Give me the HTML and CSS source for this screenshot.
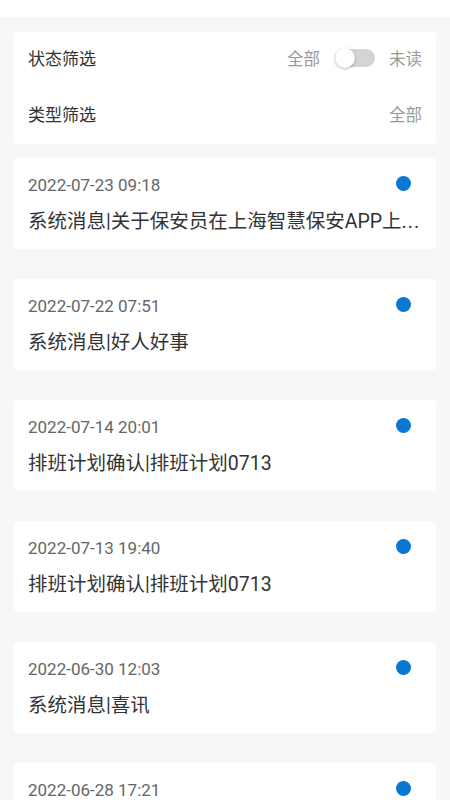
FILE: index.html
```html
<!DOCTYPE html>
<html lang="zh-CN">
<head>
    <meta charset="UTF-8">
    <meta name="viewport" content="width=device-width, initial-scale=1.0">
    <title>消息列表</title>
    <link rel="stylesheet" href="styles.css">
</head>
<body>
    <div class="header"></div>
    <div class="page">
        <div class="filter">
            <div class="filter-row">
                <span class="filter-label">状态筛选</span>
                <div class="filter-value">
                    <span>全部</span>
                    <span class="switch"><span class="knob"></span></span>
                    <span>未读</span>
                </div>
            </div>
            <div class="filter-row">
                <span class="filter-label">类型筛选</span>
                <div class="filter-value">
                    <span>全部</span>
                </div>
            </div>
        </div>

        <div class="msg">
            <div class="msg-top">
                <span class="msg-time">2022-07-23 09:18</span>
                <span class="dot"></span>
            </div>
            <div class="msg-title">系统消息|关于保安员在上海智慧保安APP上<span class="more">...</span></div>
        </div>
        <div class="msg">
            <div class="msg-top">
                <span class="msg-time">2022-07-22 07:51</span>
                <span class="dot"></span>
            </div>
            <div class="msg-title">系统消息|好人好事</div>
        </div>
        <div class="msg">
            <div class="msg-top">
                <span class="msg-time">2022-07-14 20:01</span>
                <span class="dot"></span>
            </div>
            <div class="msg-title">排班计划确认|排班计划0713</div>
        </div>
        <div class="msg">
            <div class="msg-top">
                <span class="msg-time">2022-07-13 19:40</span>
                <span class="dot"></span>
            </div>
            <div class="msg-title">排班计划确认|排班计划0713</div>
        </div>
        <div class="msg">
            <div class="msg-top">
                <span class="msg-time">2022-06-30 12:03</span>
                <span class="dot"></span>
            </div>
            <div class="msg-title">系统消息|喜讯</div>
        </div>
        <div class="msg">
            <div class="msg-top">
                <span class="msg-time">2022-06-28 17:21</span>
                <span class="dot"></span>
            </div>
            <div class="msg-title">系统消息|通知</div>
        </div>
    </div>
</body>
</html>
```

FILE: styles.css
```css
body {
    margin: 0;
    font-family: Roboto, "Noto Sans CJK SC", sans-serif;
    background-color: #f7f7f7;
    color: #333;
}
.header {
    height: 17px;
    background-color: #fff;
}
.page {
    padding: 15px 14px;
}
.filter {
    background-color: #fff;
    border-radius: 4px;
    padding: 0 14px;
    margin-bottom: 14px;
}
.filter-row {
    display: flex;
    align-items: center;
    justify-content: space-between;
    height: 56px;
    padding-bottom: 5px;
    box-sizing: border-box;
}
.filter-label {
    font-size: 17px;
    color: #333;
}
.filter-value {
    display: flex;
    align-items: center;
    font-size: 16.5px;
    color: #999;
}
.switch {
    position: relative;
    width: 40px;
    height: 18px;
    margin: 0 14px 0 15px;
    border-radius: 9px;
    background-color: #d4d4d4;
}
.knob {
    position: absolute;
    left: 0;
    top: -1px;
    width: 20px;
    height: 20px;
    border-radius: 50%;
    background-color: #fff;
    box-shadow: 0 1px 3px rgba(0,0,0,0.3);
}
.msg {
    background-color: #fff;
    border-radius: 4px;
    padding: 16px 14px 14px;
    margin-bottom: 30px;
}
.msg-top {
    display: flex;
    align-items: center;
    justify-content: space-between;
    height: 22px;
}
.msg-time {
    font-size: 17px;
    color: #666;
}
.dot {
    width: 15px;
    height: 15px;
    margin: -4px 11px 0 0;
    border-radius: 50%;
    background-color: #0a78d2;
}
.msg-title {
    margin-top: 13px;
    font-size: 19.5px;
    line-height: 26px;
    white-space: nowrap;
    overflow: hidden;
    text-overflow: ellipsis;
}
.msg-title .more {
    letter-spacing: 1px;
}
```
